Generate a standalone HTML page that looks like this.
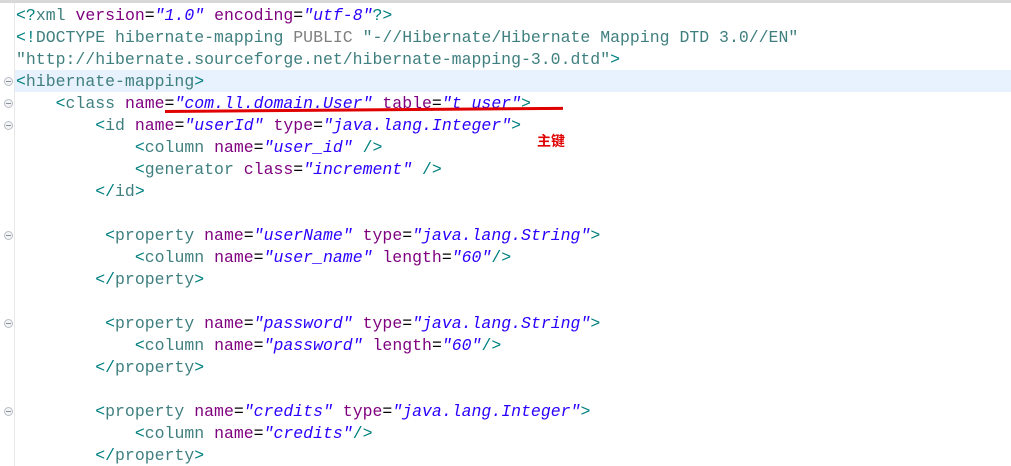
<!DOCTYPE html>
<html><head><meta charset="utf-8"><style>
html,body{margin:0;padding:0;background:#fff;width:1011px;height:466px;overflow:hidden}
body{position:relative;font-family:"Liberation Mono",monospace;font-size:16.5px}
.top{position:absolute;left:0;top:0;width:1011px;height:3px;background:#d8d8d8}
.gut{position:absolute;left:14px;top:3px;width:1px;height:463px;background:#e8e8e8}
.hl{position:absolute;left:15px;top:70px;width:996px;height:22px;background:#e8f2fe}
.l{position:absolute;left:16px;height:22px;line-height:22px;white-space:pre;margin-top:1px}
.b{color:#008080}.e{color:#3f7f7f}.a{color:#7f007f}.v{color:#2a00ff;font-style:italic}.g{color:#808080}.d{color:#3f7f7f}
.f{position:absolute;left:4px;width:7px;height:7px;border:1px solid #b8bec8;border-radius:50%;background:#f4f4f4;margin-top:1px}
.f:after{content:"";position:absolute;left:1px;top:3px;width:5px;height:1px;background:#8890a0}
.red{position:absolute;left:165px;top:110px;width:398px;height:3px;background:#e00000;transform:rotate(-0.45deg);transform-origin:left}
.zj{position:absolute;left:537px;top:131px;color:#e00000;font:bold 14px "Noto Sans CJK SC",sans-serif}
</style></head><body>
<div class="top"></div><div class="gut"></div><div class="hl"></div>
<div class="l" style="top:4px"><span class="b">&lt;?</span><span class="e">xml</span> <span class="a">version</span>=<span class="v">"1.0"</span> <span class="a">encoding</span>=<span class="v">"utf-8"</span><span class="b">?&gt;</span></div>
<div class="l" style="top:26px"><span class="b">&lt;!</span><span class="d">DOCTYPE hibernate-mapping</span> <span class="g">PUBLIC</span> <span class="d">"-//Hibernate/Hibernate Mapping DTD 3.0//EN"</span></div>
<div class="l" style="top:48px"><span class="d">"http://hibernate.sourceforge.net/hibernate-mapping-3.0.dtd"</span><span class="b">&gt;</span></div>
<div class="l" style="top:70px"><span class="b">&lt;</span><span class="e">hibernate-mapping</span><span class="b">&gt;</span></div>
<div class="l" style="top:92px">    <span class="b">&lt;</span><span class="e">class</span> <span class="a">name</span>=<span class="v">"com.ll.domain.User"</span> <span class="a">table</span>=<span class="v">"t_user"</span><span class="b">&gt;</span></div>
<div class="l" style="top:114px">        <span class="b">&lt;</span><span class="e">id</span> <span class="a">name</span>=<span class="v">"userId"</span> <span class="a">type</span>=<span class="v">"java.lang.Integer"</span><span class="b">&gt;</span></div>
<div class="l" style="top:136px">            <span class="b">&lt;</span><span class="e">column</span> <span class="a">name</span>=<span class="v">"user_id"</span> <span class="b">/&gt;</span></div>
<div class="l" style="top:158px">            <span class="b">&lt;</span><span class="e">generator</span> <span class="a">class</span>=<span class="v">"increment"</span> <span class="b">/&gt;</span></div>
<div class="l" style="top:180px">        <span class="b">&lt;/</span><span class="e">id</span><span class="b">&gt;</span></div>
<div class="l" style="top:224px">         <span class="b">&lt;</span><span class="e">property</span> <span class="a">name</span>=<span class="v">"userName"</span> <span class="a">type</span>=<span class="v">"java.lang.String"</span><span class="b">&gt;</span></div>
<div class="l" style="top:246px">            <span class="b">&lt;</span><span class="e">column</span> <span class="a">name</span>=<span class="v">"user_name"</span> <span class="a">length</span>=<span class="v">"60"</span><span class="b">/&gt;</span></div>
<div class="l" style="top:268px">        <span class="b">&lt;/</span><span class="e">property</span><span class="b">&gt;</span></div>
<div class="l" style="top:312px">         <span class="b">&lt;</span><span class="e">property</span> <span class="a">name</span>=<span class="v">"password"</span> <span class="a">type</span>=<span class="v">"java.lang.String"</span><span class="b">&gt;</span></div>
<div class="l" style="top:334px">            <span class="b">&lt;</span><span class="e">column</span> <span class="a">name</span>=<span class="v">"password"</span> <span class="a">length</span>=<span class="v">"60"</span><span class="b">/&gt;</span></div>
<div class="l" style="top:356px">        <span class="b">&lt;/</span><span class="e">property</span><span class="b">&gt;</span></div>
<div class="l" style="top:400px">        <span class="b">&lt;</span><span class="e">property</span> <span class="a">name</span>=<span class="v">"credits"</span> <span class="a">type</span>=<span class="v">"java.lang.Integer"</span><span class="b">&gt;</span></div>
<div class="l" style="top:422px">            <span class="b">&lt;</span><span class="e">column</span> <span class="a">name</span>=<span class="v">"credits"</span><span class="b">/&gt;</span></div>
<div class="l" style="top:444px">        <span class="b">&lt;/</span><span class="e">property</span><span class="b">&gt;</span></div>
<div class="f" style="top:76px"></div>
<div class="f" style="top:98px"></div>
<div class="f" style="top:120px"></div>
<div class="f" style="top:230px"></div>
<div class="f" style="top:318px"></div>
<div class="f" style="top:406px"></div>
<div class="red"></div>
<div class="zj">主键</div>
</body></html>
